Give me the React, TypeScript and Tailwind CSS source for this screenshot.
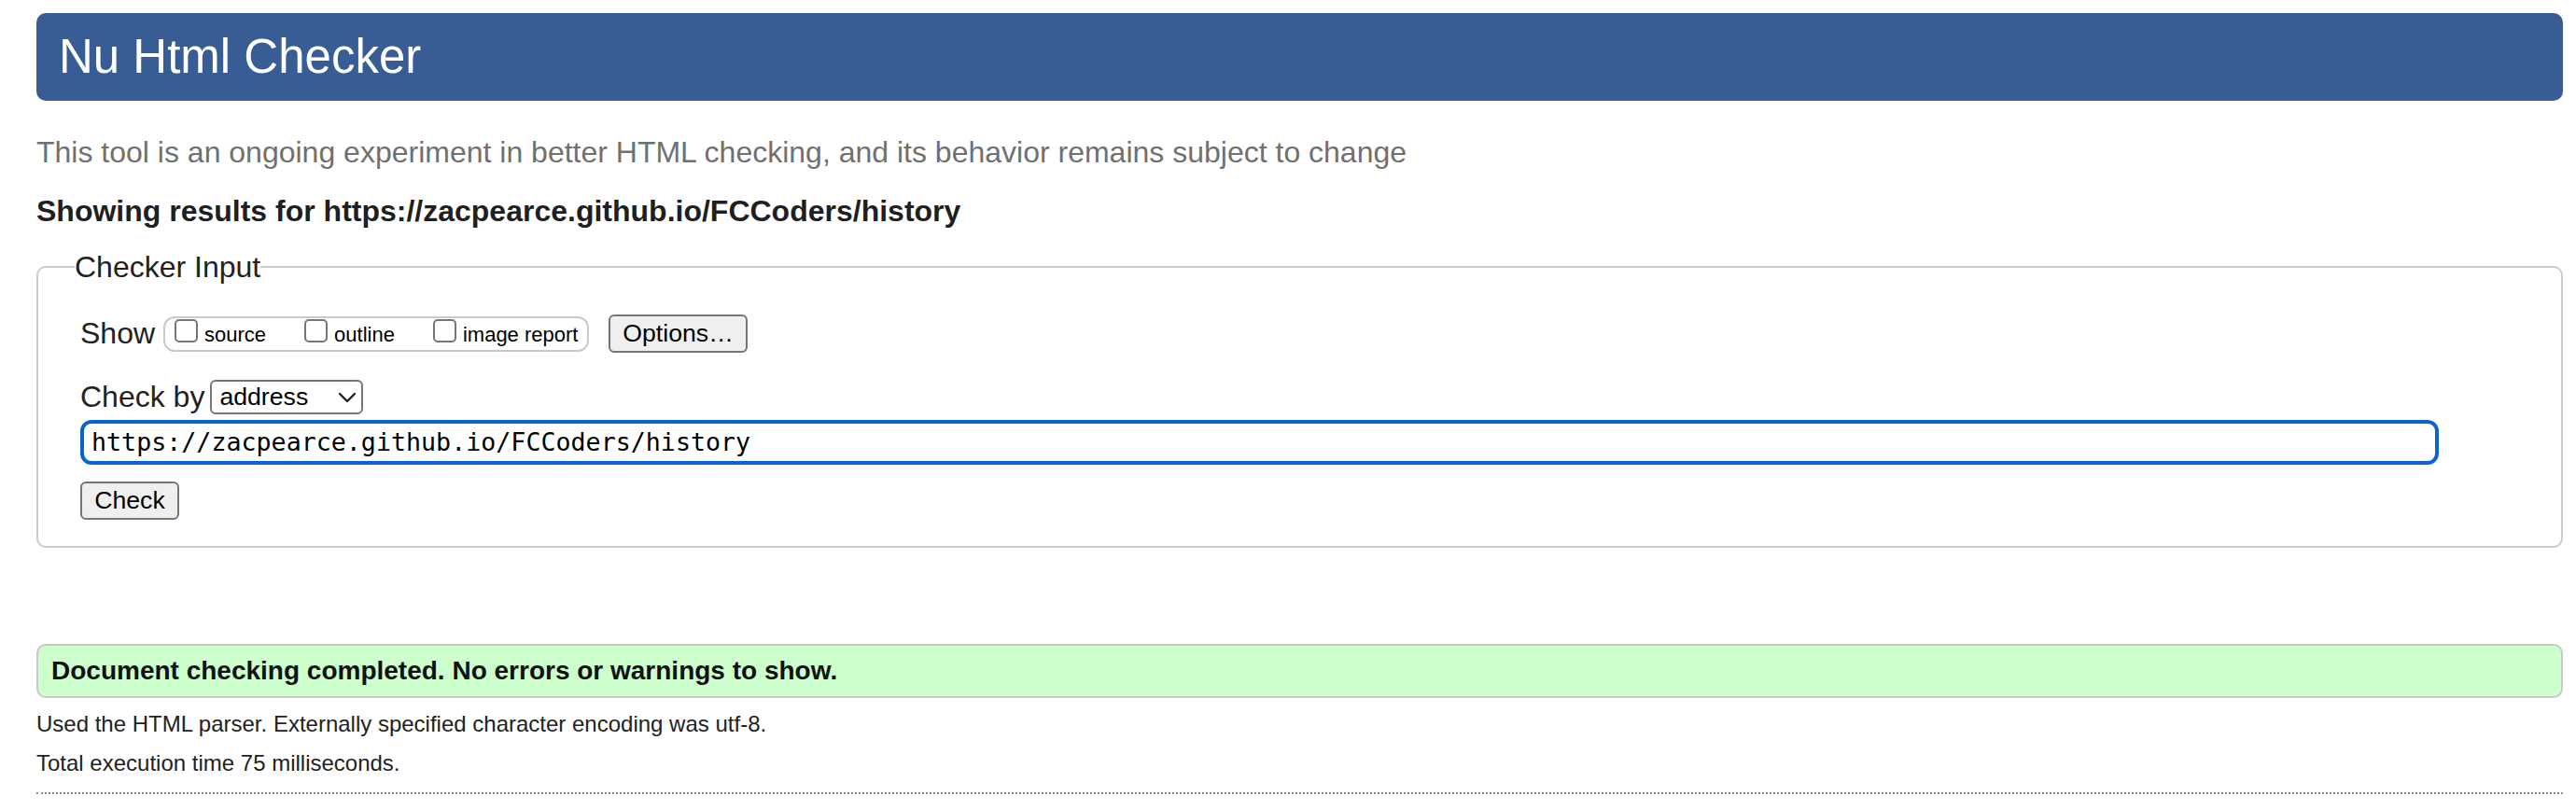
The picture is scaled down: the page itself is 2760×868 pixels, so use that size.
import React from 'react';

const CheckBox = () => (
  <span className="block w-[25px] h-[25px] shrink-0 rounded-[5px] border-2 border-[#767676] bg-white" />
);

const ShowOption = ({ label, first }: { label: string; first?: boolean }) => (
  <div className={`flex items-start ${first ? '' : 'ml-[41px]'}`}>
    <CheckBox />
    <span className="ml-[7px] mt-[6px] text-[22px] leading-[22px] text-black">{label}</span>
  </div>
);

const App = () => {
  return (
    <div className="min-h-screen bg-white pt-[14px] pl-[39px] pr-[14px] font-['Liberation_Sans',Arial,sans-serif] text-[#222]">
      <h1 className="h-[94px] rounded-[10px] bg-[#385d94] pl-[24px] text-[51px] leading-[94px] font-normal text-white">
        Nu Html Checker
      </h1>

      <p className="mt-[35px] text-[32px] leading-[40px] text-[#707070]">
        This tool is an ongoing experiment in better HTML checking, and its behavior remains subject to change
      </p>

      <p className="mt-[23px] text-[32px] leading-[40px] font-bold text-[#1f1f22]">
        Showing results for https://zacpearce.github.io/FCCoders/history
      </p>

      <fieldset className="mt-[22px] rounded-[10px] border-2 border-[#cccccc] pl-[39px] pb-[28px]">
        <legend className="text-[32px] leading-[36px] text-[#222]">Checker Input</legend>

        <div className="ml-[6px] pt-[33px]">
          <div className="flex h-[41px] items-center">
            <span className="text-[32px] leading-[41px]">Show</span>
            <div className="ml-[9px] flex h-[38px] w-[456px] items-start rounded-[12px] border-2 border-[#c9c9c9] pl-[10px] pt-[1px]">
              <ShowOption label="source" first />
              <ShowOption label="outline" />
              <ShowOption label="image report" />
            </div>
            <button className="ml-[21px] h-[41px] w-[149px] rounded-[6px] border-2 border-[#767676] bg-[#efefef] text-[26.67px] leading-[37px] text-black">
              Options…
            </button>
          </div>

          <div className="mt-[29px] flex h-[37px] items-center">
            <span className="text-[32px] leading-[37px]">Check by</span>
            <div className="ml-[6px] flex h-[37px] w-[164px] items-center rounded-[6px] border-2 border-[#767676] bg-white pl-[8px] pr-[5px]">
              <span className="text-[26.67px] leading-[33px] text-black">address</span>
              <svg className="ml-auto" width="20" height="12" viewBox="0 0 20 12" fill="none">
                <path d="M2 2l8 8 8-8" stroke="#222" strokeWidth="2.4" strokeLinecap="round" strokeLinejoin="round" />
              </svg>
            </div>
          </div>

          <div className="mt-[6px] flex h-[48px] w-[2527px] items-center rounded-[12px] border-4 border-[#0b62d0] bg-white pl-[8px]">
            <span className="font-['DejaVu_Sans_Mono',monospace] text-[26.67px] leading-[40px] text-black">
              https://zacpearce.github.io/FCCoders/history
            </span>
          </div>

          <button className="mt-[18px] block h-[41px] w-[106px] rounded-[6px] border-2 border-[#767676] bg-[#efefef] text-[26.67px] leading-[37px] text-black">
            Check
          </button>
        </div>
      </fieldset>

      <div className="mt-[103px] h-[58px] rounded-[10px] border-2 border-[#c8c8c8] bg-[#ccffcc] pl-[14px]">
        <p className="text-[28px] leading-[54px] font-bold text-[#111]">
          Document checking completed. No errors or warnings to show.
        </p>
      </div>

      <p className="mt-[13px] text-[24px] leading-[30px] text-[#222]">
        Used the HTML parser. Externally specified character encoding was utf-8.
      </p>
      <p className="mt-[12px] text-[24px] leading-[30px] text-[#222]">Total execution time 75 milliseconds.</p>

      <div className="mt-[16px] border-t-2 border-dotted border-[#8a8a8a]" />
    </div>
  );
};

export default App;
